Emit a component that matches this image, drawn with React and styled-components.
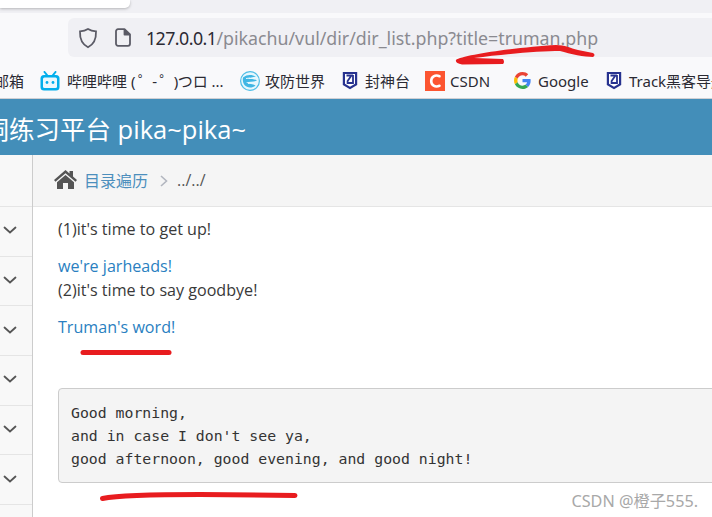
import styled, { createGlobalStyle } from "styled-components";

const GlobalStyle = createGlobalStyle`
  * {
    box-sizing: border-box;
  }

  html, body {
    margin: 0;
    height: 517px;
    overflow: hidden;
    background: #fff;
    font-family: "Open Sans", sans-serif;
  }

  svg {
    flex: none;
  }
`;

const Page = styled.div`
  position: relative;
  width: 712px;
  height: 517px;
  overflow: hidden;
  display: flex;
  flex-direction: column;
`;

const TabStrip = styled.div`
  height: 13px;
  background: #f0f0f4;
`;

const ActiveTab = styled.div`
  width: 130px;
  height: 8px;
  background: #fff;
  border-radius: 0 0 5px 0;
  box-shadow: 0 1px 3px rgba(0, 0, 0, 0.25);
`;

const Toolbar = styled.div`
  height: 45px;
  background: #f9f9fb;
  padding: 5px 0 1px 68px;
`;

const UrlBar = styled.div`
  height: 39px;
  background: #f0f0f4;
  border-radius: 6px 0 0 6px;
  display: flex;
  align-items: center;
  padding-left: 10px;
  gap: 15px;
  font-family: "Noto Sans", sans-serif;
  font-size: 17.8px;
  color: #8a8a90;
  white-space: nowrap;
`;

const UrlIcons = styled.div`
  display: flex;
  align-items: center;
  gap: 17px;
`;

const Host = styled.span`
  color: #2b2a33;
  letter-spacing: -0.55px;
`;

const Bookmarks = styled.div`
  height: 41px;
  background: #f9f9fb;
  border-bottom: 1px solid #d0d0d4;
  padding-top: 5px;
  display: flex;
  align-items: center;
  font-family: "Noto Sans", "Noto Sans CJK SC", sans-serif;
  font-size: 15px;
  color: #2b2a33;
  white-space: nowrap;
  overflow: hidden;
`;

const Bookmark = styled.div`
  flex: none;
  width: ${(p) => p.$width}px;
  display: flex;
  align-items: center;
  gap: ${(p) => p.$gap ?? 6}px;
  overflow: ${(p) => (p.$clip ? "hidden" : "visible")};
`;

const ClippedBookmark = styled.div`
  flex: none;
  width: 24px;
  margin-right: 16px;
  display: flex;
  justify-content: flex-end;
`;

const Emoticon = styled.span`
  letter-spacing: -0.7px;
`;

const HeaderBand = styled.div`
  height: 56px;
  background: #438eb9;
  flex: none;
`;

const Title = styled.div`
  width: 246px;
  height: 100%;
  color: #fff;
  font-family: "Open Sans", "Noto Sans CJK SC", sans-serif;
  font-size: 25.5px;
  display: flex;
  align-items: center;
  justify-content: flex-end;
  white-space: nowrap;
`;

const Main = styled.div`
  flex: 1;
  display: flex;
  min-height: 0;
`;

const Sidebar = styled.div`
  width: 33px;
  flex: none;
  background: #f8f8f8;
  border-right: 1px solid #ccc;
`;

const SideTop = styled.div`
  height: 52px;
  border-bottom: 1px solid #e5e5e5;
`;

const SideRow = styled.div`
  height: 49.67px;
  border-bottom: 1px solid #e5e5e5;
  display: flex;
  align-items: center;
  padding-left: 2px;
  padding-bottom: 2px;
  color: #555;
`;

const Content = styled.div`
  flex: 1;
  min-width: 0;
  display: flex;
  flex-direction: column;
`;

const Breadcrumb = styled.div`
  height: 52px;
  background: #f5f5f5;
  border-bottom: 1px solid #e5e5e5;
  display: flex;
  align-items: center;
  padding: 0 0 2px 21px;
  font-family: "Open Sans", "Noto Sans CJK SC", sans-serif;
  font-size: 16px;
`;

const CrumbLink = styled.span`
  color: #4c8fbd;
  margin-left: 7px;
`;

const CrumbSep = styled.span`
  display: flex;
  margin: 2px 9px 0 12px;
`;

const CrumbCurrent = styled.span`
  color: #555;
`;

const Body = styled.div`
  padding: 10px 0 0 25px;
  font-size: 16.1px;
  line-height: 24px;
  color: #393939;
`;

const Para = styled.p`
  margin: 0 0 ${(p) => p.$after ?? 13}px;
`;

const Accent = styled.a`
  color: #2a7fc1;
  text-decoration: none;
`;

const Code = styled.pre`
  margin: 49px 0 0;
  height: 95px;
  width: 700px;
  padding: 12px 12px;
  background: #f4f4f4;
  border: 1px solid #ccc;
  border-radius: 4px 0 0 4px;
  font-family: "DejaVu Sans Mono", monospace;
  font-size: 14.82px;
  line-height: 23px;
  color: #333;
`;

const Watermark = styled.div`
  position: absolute;
  right: 14px;
  top: 488px;
  font-family: "Noto Sans", "Noto Sans CJK SC", sans-serif;
  font-size: 16.2px;
  color: #a8a8a8;
  white-space: nowrap;
`;

const Scribbles = styled.svg`
  position: absolute;
  left: 0;
  top: 0;
  pointer-events: none;
`;

const Chevron = () => (
  <svg width="16" height="16" viewBox="0 0 16 16" fill="none" stroke="#555" strokeWidth="1.8" strokeLinecap="round">
    <path d="M2.5 5.5 8 10.500 13.500 5.500" />
  </svg>
);

const Shield = () => (
  <svg width="20" height="22" viewBox="0 0 20 22" fill="none" stroke="#5b5b66" strokeWidth="1.8">
    <path d="M10 2 C12.5 3.6 15 4.2 18 4.4 C18.3 12 15.8 17.4 10 20.2 C4.2 17.4 1.7 12 2 4.4 C5 4.2 7.5 3.6 10 2 Z" />
  </svg>
);

const PageIcon = () => (
  <svg width="16" height="19" viewBox="0 0 16 19" fill="none" stroke="#5b5b66" strokeWidth="1.8" strokeLinejoin="round">
    <path d="M3 1.2 H9.5 L15 6.5 V15.8 A2 2 0 0 1 13 17.8 H3 A2 2 0 0 1 1 15.8 V3.2 A2 2 0 0 1 3 1.2 Z" />
    <path d="M9.5 1.2 V6.5 H15" fill="#5b5b66" />
  </svg>
);

const Bilibili = () => (
  <svg width="20" height="20" viewBox="0 0 20 20">
    <path d="M4.500 1 7 4.200M15.500 1 13 4.200" stroke="#00aeec" strokeWidth="2" strokeLinecap="round" />
    <rect x="0.500" y="4" width="19" height="15.500" rx="3.500" fill="#00aeec" />
    <rect x="3" y="6.500" width="14" height="10.500" rx="1.500" fill="#e8f8fe" />
    <circle cx="7" cy="11.500" r="1.400" fill="#00aeec" />
    <circle cx="13" cy="11.500" r="1.400" fill="#00aeec" />
  </svg>
);

const Globe = () => (
  <svg width="20" height="20" viewBox="0 0 20 20">
    <circle cx="10" cy="10" r="9.400" fill="#e6f7fd" stroke="#4dbde6" strokeWidth="1.200" />
    <path d="M3 6.500 C7 3 12 3.500 16 5.500 C13 6.500 9 6.500 8 8 C11 8 15 8 17 9.500 C14 11 9 10.500 6 11.500 C9 13 13 13 15.500 14.500 C12 17.500 7 17 4.500 14 C3 12 2.500 9 3 6.500 Z" fill="#3fb6e4" />
    <path d="M6 7.500 10 7M8 12.500 13 11.500" stroke="#e6f7fd" strokeWidth="1" />
  </svg>
);

const TrackShield = () => (
  <svg width="16" height="19" viewBox="0 0 16 19">
    <path d="M0.800 1 H15.200 V14 L8 18.200 0.800 14 Z" fill="#27328f" />
    <path d="M3 3 H13 V12.800 L8 15.800 3 12.800 Z" fill="#fff" />
    <path d="M4.500 4.500 H9.500 L5.600 10 V12 H11 V4" fill="none" stroke="#27328f" strokeWidth="1.800" />
  </svg>
);

const CsdnLogo = () => (
  <svg width="20" height="20" viewBox="0 0 20 20">
    <rect width="20" height="20" fill="#fc5531" />
    <path d="M14.500 5.200 C10 3.400 6.200 5.800 6.200 10 C6.200 14.200 10 16.600 14.500 14.800" fill="none" stroke="#fff" strokeWidth="2.600" strokeLinecap="round" />
  </svg>
);

const GoogleLogo = () => (
  <svg width="17" height="17" viewBox="0 0 48 48">
    <path fill="#EA4335" d="M24 9.500c3.500 0 6.700 1.200 9.200 3.600l6.900-6.900C35.900 2.400 30.500 0 24 0 14.600 0 6.500 5.400 2.600 13.200l8 6.200C12.500 13.700 17.800 9.500 24 9.500z" />
    <path fill="#4285F4" d="M47 24.500c0-1.600-.2-3.100-.4-4.500H24v9h12.900c-.6 3-2.200 5.500-4.800 7.200l7.700 6c4.500-4.200 7.200-10.300 7.200-17.700z" />
    <path fill="#FBBC05" d="M10.500 28.600c-.5-1.400-.8-3-.8-4.600s.3-3.200.8-4.600l-8-6.200C.9 16.500 0 20.100 0 24s.9 7.500 2.600 10.800l7.900-6.200z" />
    <path fill="#34A853" d="M24 48c6.500 0 11.900-2.100 15.900-5.800l-7.700-6c-2.200 1.500-5 2.300-8.200 2.300-6.200 0-11.500-4.200-13.400-9.900l-8 6.200C6.500 42.600 14.600 48 24 48z" />
  </svg>
);

const HomeIcon = () => (
  <svg width="23" height="19" viewBox="0 0 23 19">
    <path d="M11.500 0 L15.500 3.500 V1 H19 V6.500 L23 10 L21.500 11.800 L11.500 3.200 L1.500 11.800 L0 10 Z" fill="#555" />
    <path d="M11.500 5 L20 12.200 V19 H14 V13 H9 V19 H3 V12.200 Z" fill="#555" />
  </svg>
);

const CrumbArrow = () => (
  <svg width="8" height="12" viewBox="0 0 8 12" fill="none" stroke="#b2b6bf" strokeWidth="1.600">
    <path d="M1 1 6.500 6 1 11" />
  </svg>
);

const sideRows = [0, 1, 2, 3, 4, 5, 6];

const App = () => {
  return (
    <>
      <GlobalStyle />
      <Page>
        <TabStrip>
          <ActiveTab />
        </TabStrip>
        <Toolbar>
          <UrlBar>
            <UrlIcons>
              <Shield />
              <PageIcon />
            </UrlIcons>
            <span>
              <Host>127.0.0.1</Host>/pikachu/vul/dir/dir_list.php?title=truman.php
            </span>
          </UrlBar>
        </Toolbar>
        <Bookmarks>
          <ClippedBookmark>
            <span>邮箱</span>
          </ClippedBookmark>
          <Bookmark $width={200} $gap={7} $clip>
            <Bilibili />
            <span>
              哔哩哔哩 <Emoticon>( ゜- ゜)</Emoticon>つロ ...
            </span>
          </Bookmark>
          <Bookmark $width={102} $gap={5}>
            <Globe />
            <span>攻防世界</span>
          </Bookmark>
          <Bookmark $width={83} $gap={7}>
            <TrackShield />
            <span>封神台</span>
          </Bookmark>
          <Bookmark $width={89} $gap={5}>
            <CsdnLogo />
            <span>CSDN</span>
          </Bookmark>
          <Bookmark $width={92} $gap={7}>
            <GoogleLogo />
            <span>Google</span>
          </Bookmark>
          <Bookmark $width={106} $gap={7}>
            <TrackShield />
            <span>Track黑客导航</span>
          </Bookmark>
        </Bookmarks>
        <HeaderBand>
          <Title>
            <span>Pikachu 漏洞练习平台 pika~pika~</span>
          </Title>
        </HeaderBand>
        <Main>
          <Sidebar>
            <SideTop />
            {sideRows.map((row) => (
              <SideRow key={row}>
                <Chevron />
              </SideRow>
            ))}
          </Sidebar>
          <Content>
            <Breadcrumb>
              <HomeIcon />
              <CrumbLink>目录遍历</CrumbLink>
              <CrumbSep>
                <CrumbArrow />
              </CrumbSep>
              <CrumbCurrent>../../</CrumbCurrent>
            </Breadcrumb>
            <Body>
              <Para>(1)it's time to get up!</Para>
              <Para $after={0}>
                <Accent>we're jarheads!</Accent>
              </Para>
              <Para>(2)it's time to say goodbye!</Para>
              <Para $after={0}>
                <Accent>Truman's word!</Accent>
              </Para>
              <Code>{`Good morning,
and in case I don't see ya,
good afternoon, good evening, and good night!`}</Code>
            </Body>
          </Content>
        </Main>
        <Watermark>CSDN @橙子555.</Watermark>
        <Scribbles width="712" height="517" viewBox="0 0 712 517" fill="none" stroke="#e81c1f" strokeLinecap="round">
          <path
            d="M456 60 C462 55 520 47 556 45 C565 45 570 48 578 50 L593 53 Q596 55 593 57 C585 57 570 54 560 51 C540 51 505 54 474 58 L503 59 Q505 62 503 64 L462 64.500 Q455 63 456 60 Z"
            fill="#e81c1f"
            stroke="none"
          />
          <path d="M83 352.500 H169" strokeWidth="5" />
          <path d="M102.500 498.500 C120 495 160 494.500 200 494.500 L295 495.500" strokeWidth="5" />
        </Scribbles>
      </Page>
    </>
  );
};

export default App;
